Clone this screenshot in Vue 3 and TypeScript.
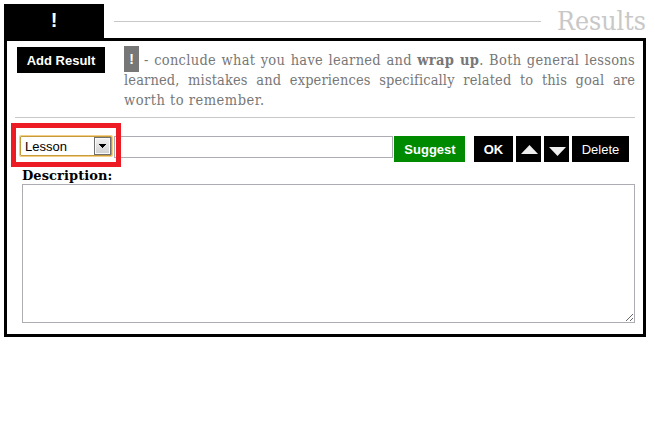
<script setup lang="ts">
import { ref } from 'vue'

const kind = ref('Lesson')
const title = ref('')
const description = ref('')
</script>

<template>
  <main class="page">
    <header class="head">
      <div class="tab">!</div>
      <div class="rule"></div>
      <h1>Results</h1>
    </header>
    <section class="panel">
      <div class="intro">
        <button class="btn add">Add Result</button>
        <div class="copy">
          <div class="line first"><span class="mark">!</span><span class="text">- conclude what you have learned and <b>wrap up</b>. Both general lessons</span></div>
          <div class="line second">learned, mistakes and experiences specifically related to this goal are</div>
          <div class="line last">worth to remember.</div>
        </div>
      </div>
      <div class="row">
        <div class="highlight">
          <div class="select">
            <span>{{ kind }}</span>
            <i class="drop"><svg width="7" height="4" viewBox="0 0 7 4" shape-rendering="crispEdges"><path d="M0 0H7V1H6V2H5V3H4V4H3V3H2V2H1V1H0Z" /></svg></i>
          </div>
        </div>
        <input v-model="title" class="title" type="text" />
        <button class="btn suggest">Suggest</button>
        <button class="btn ok">OK</button>
        <button class="btn arrow"><svg width="17" height="9" viewBox="0 0 17 9"><path d="M0 9L8.5 0L17 9Z" fill="#eee" /></svg></button>
        <button class="btn arrow down"><svg width="17" height="9" viewBox="0 0 17 9"><path d="M0 0H17L8.5 9Z" fill="#eee" /></svg></button>
        <button class="btn delete">Delete</button>
      </div>
      <label class="label" for="description">Description:</label>
      <div class="area">
        <textarea id="description" v-model="description"></textarea>
        <svg class="grip" width="7" height="7" viewBox="0 0 7 7" shape-rendering="crispEdges"><path d="M0 6h1v1H0zM1 5h1v1H1zM2 4h1v1H2zM3 3h1v1H3zM4 2h1v1H4zM5 1h1v1H5zM6 0h1v1H6zM4 6h1v1H4zM5 5h1v1H5zM6 4h1v1H6z" fill="#666" /></svg>
      </div>
    </section>
  </main>
</template>

<style>
body {
  margin: 0;
  background: #fff;
}
</style>

<style scoped>
* {
  box-sizing: border-box;
}
.page {
  width: 655px;
  height: 445px;
  padding: 4px 9px 0 4px;
  overflow: hidden;
  font-family: "DejaVu Serif Condensed", "DejaVu Serif", serif;
  font-stretch: condensed;
}
.head {
  display: flex;
  height: 34px;
}
.tab {
  width: 100px;
  background: #000;
  color: #fff;
  font: bold 20px/32px "Liberation Sans", sans-serif;
  text-align: center;
}
.rule {
  width: 427px;
  height: 1px;
  margin: 17px 0 0 10px;
  background: #c8c8c8;
}
h1 {
  flex: 1;
  margin: 0;
  color: #c8c8c8;
  font-size: 26.5px;
  font-weight: normal;
  line-height: 34px;
  text-align: right;
  white-space: nowrap;
}
.panel {
  width: 642px;
  height: 299px;
  padding: 5px 8px 0;
  border: 3px solid #000;
}
.intro {
  display: flex;
  height: 72px;
  border-bottom: 1px solid #c8c8c8;
}
.btn {
  height: 26px;
  padding: 0;
  border: 0;
  border-radius: 0;
  background: #000;
  color: #fff;
  font: bold 13px/26px "Liberation Sans", sans-serif;
  white-space: nowrap;
}
.add {
  width: 88px;
  margin: 1px 19px 0 2px;
  padding-top: 1px;
}
.copy {
  width: 511px;
  padding-top: 4px;
  color: #777;
  font-size: 14.5px;
}
.line {
  height: 20px;
  line-height: 20px;
  text-align: justify;
  text-align-last: justify;
}
.first {
  display: flex;
  letter-spacing: 0.3px;
}
.text {
  flex: 1;
  margin-left: 5px;
  white-space: nowrap;
}
.second {
  letter-spacing: 0.12px;
}
.last {
  letter-spacing: 0.5px;
  text-align-last: left;
}
.mark {
  width: 15px;
  height: 26px;
  margin-top: -4px;
  background: #777;
  color: #fff;
  font: bold 14px/27px "Liberation Sans", sans-serif;
  letter-spacing: 0;
  text-align: center;
  text-align-last: center;
}
.row {
  display: flex;
  height: 44px;
  margin: 5px 0 0 -4px;
}
.highlight {
  position: relative;
  z-index: 1;
  width: 110px;
  height: 44px;
  padding: 8px 3px 0 3px;
  border: 5px solid #ed1c24;
}
.select {
  display: flex;
  justify-content: space-between;
  width: 92px;
  height: 20px;
  margin-left: 1px;
  padding-left: 4px;
  border: 1px solid #c79a3c;
  border-radius: 1px;
  box-shadow: 0 0 0 1px #f3ce83;
  color: #000;
  font: 13px/20px "Liberation Sans", sans-serif;
}
.drop {
  display: flex;
  align-items: center;
  justify-content: center;
  width: 17px;
  height: 18px;
  border: 1px solid #707070;
  background: linear-gradient(#f2f2f2, #d0d0d0);
  box-shadow: inset 0 0 0 1px #fafafa;
}
.title {
  width: 279px;
  height: 22px;
  margin: 13px 1px 0 -7px;
  padding: 0 4px;
  border: 1px solid #abadb3;
  background: #fff;
}
.row .btn {
  margin-top: 13px;
}
.row .suggest {
  width: 71px;
  margin-right: 9px;
  padding: 1px 0 0 1px;
  background: #008a00;
}
.ok {
  width: 39px;
  padding-top: 1px;
}
.arrow {
  display: flex;
  align-items: center;
  justify-content: center;
  width: 25px;
  margin-left: 3px;
  padding: 1px 0 0 2px;
}
.down {
  padding-top: 4px;
}
.row .delete {
  width: 57px;
  margin-left: 3px;
  padding-top: 1px;
  font-weight: normal;
}
.label {
  display: block;
  height: 17px;
  margin-left: 7px;
  color: #000;
  font-family: "DejaVu Serif", serif;
  font-size: 13px;
  font-stretch: normal;
  font-weight: bold;
  line-height: 18px;
  letter-spacing: 0.08px;
}
.area {
  position: relative;
  width: 613px;
  height: 139px;
  margin-left: 7px;
}
textarea {
  display: block;
  width: 100%;
  height: 100%;
  padding: 3px;
  border: 1px solid #abadb3;
  background: #fff;
  resize: none;
}
.grip {
  position: absolute;
  right: 2px;
  bottom: 2px;
}
</style>
